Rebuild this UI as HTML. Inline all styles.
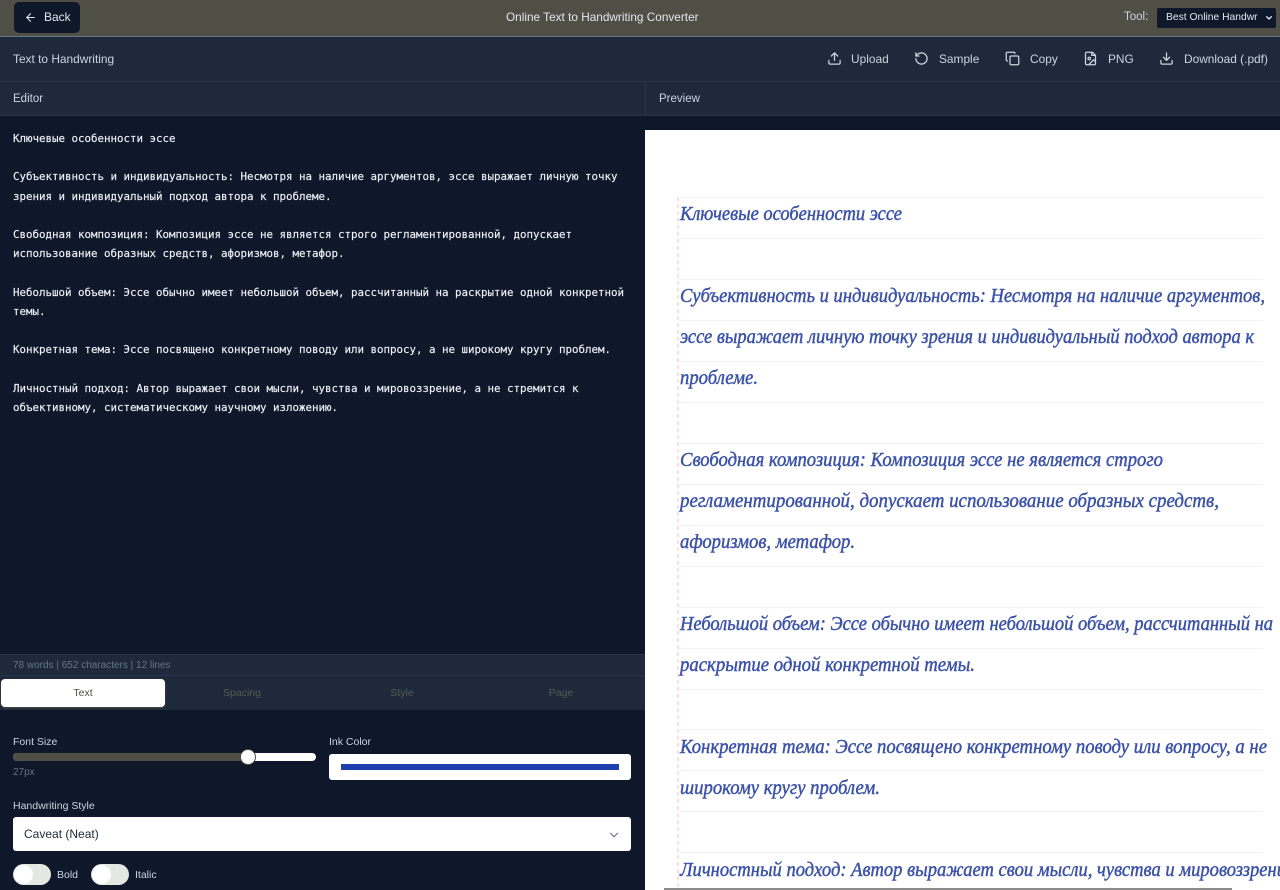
<!DOCTYPE html>
<html lang="ru"><head><meta charset="utf-8"><title>Online Text to Handwriting Converter</title>
<style>
*{box-sizing:border-box;margin:0;padding:0}
html,body{width:1280px;height:890px;overflow:hidden;background:#0f172a;font-family:"Liberation Sans",sans-serif}
.a{position:absolute;white-space:nowrap}
svg.i{position:absolute;fill:none;stroke:#cbd5e1;stroke-width:2;stroke-linecap:round;stroke-linejoin:round}
.tb{font-size:11.9px;color:#cbd5e1;top:52px;line-height:14px}
pre{position:absolute;left:13px;top:129px;font:10.8px/19.22px "DejaVu Sans Mono","Liberation Mono",monospace;color:#eef2f6;-webkit-text-stroke:.15px #eef2f6}
.lab{font-size:10.5px;color:#cbd5e1;line-height:12px}
.tab{top:687px;font-size:10.5px;line-height:13px;color:#565a4f;transform:translateX(-50%)}
</style></head><body>
<div class="a" style="left:0;top:0;width:1280px;height:37px;background:#4f4f45;border-bottom:1px solid #64748b"></div>
<div class="a" style="left:14px;top:2px;width:66px;height:31px;background:#0f172a;border-radius:5px"></div>
<svg class="i" style="left:24px;top:11px;stroke:#e2e8f0" width="13" height="13" viewBox="0 0 24 24"><path d="M19 12H5M12 19l-7-7 7-7"/></svg>
<div class="a" style="left:44px;top:10px;font-size:12px;line-height:15px;color:#e2e8f0">Back</div>
<div class="a" style="left:506px;top:10px;font-size:11.8px;line-height:15px;color:#e2e8f0">Online Text to Handwriting Converter</div>
<div class="a" style="left:1124px;top:10px;font-size:11.5px;line-height:15px;color:#cbd5e1">Tool:</div>
<div class="a" style="left:1157px;top:8px;width:119px;height:20px;background:#0f172a;border-radius:2px"></div>
<div class="a" style="left:1166px;top:11px;font-size:10.3px;line-height:14px;color:#e2e8f0">Best Online Handwr</div>
<svg class="i" style="left:1265px;top:14px;stroke:#e2e8f0;stroke-width:4" width="8" height="8" viewBox="0 0 24 24"><path d="M5 8l7 7 7-7"/></svg>

<div class="a" style="left:0;top:37px;width:1280px;height:45px;background:#1e293b;border-bottom:1px solid #27344a"></div>
<div class="a tb" style="left:13px">Text to Handwriting</div>
<svg class="i" style="left:827px;top:51px" width="15" height="15" viewBox="0 0 24 24"><path d="M21 15v4a2 2 0 0 1-2 2H5a2 2 0 0 1-2-2v-4M17 8l-5-5-5 5M12 3v12"/></svg>
<div class="a tb" style="left:851px">Upload</div>
<svg class="i" style="left:914px;top:51px" width="15" height="15" viewBox="0 0 24 24"><path d="M3 12a9 9 0 1 0 9-9 9.750 9.750 0 0 0-6.740 2.740L3 8"/><path d="M3 3v5h5"/></svg>
<div class="a tb" style="left:939px">Sample</div>
<svg class="i" style="left:1005px;top:51px" width="15" height="15" viewBox="0 0 24 24"><rect x="8" y="8" width="14" height="14" rx="2"/><path d="M4 16c-1.100 0-2-.9-2-2V4c0-1.100.9-2 2-2h10c1.100 0 2 .9 2 2"/></svg>
<div class="a tb" style="left:1030px">Copy</div>
<svg class="i" style="left:1083px;top:51px" width="15" height="15" viewBox="0 0 24 24"><path d="M15 2H6a2 2 0 0 0-2 2v16a2 2 0 0 0 2 2h12a2 2 0 0 0 2-2V7z"/><path d="M14 2v5h6"/><circle cx="10" cy="12" r="2"/><path d="M20 17l-3-3-7 7"/></svg>
<div class="a tb" style="left:1108px">PNG</div>
<svg class="i" style="left:1159px;top:51px" width="15" height="15" viewBox="0 0 24 24"><path d="M21 15v4a2 2 0 0 1-2 2H5a2 2 0 0 1-2-2v-4M7 10l5 5 5-5M12 15V3"/></svg>
<div class="a tb" style="left:1184px">Download (.pdf)</div>

<div class="a" style="left:0;top:82px;width:1280px;height:34px;background:#1e293b;border-bottom:1px solid #27344a"></div>
<div class="a" style="left:645px;top:82px;width:1px;height:808px;background:#27344a"></div>
<div class="a" style="left:13px;top:92px;font-size:11.5px;line-height:14px;color:#cbd5e1">Editor</div>
<div class="a" style="left:659px;top:92px;font-size:11.5px;line-height:14px;color:#cbd5e1">Preview</div>

<pre>Ключевые особенности эссе

Субъективность и индивидуальность: Несмотря на наличие аргументов, эссе выражает личную точку
зрения и индивидуальный подход автора к проблеме.

Свободная композиция: Композиция эссе не является строго регламентированной, допускает
использование образных средств, афоризмов, метафор.

Небольшой объем: Эссе обычно имеет небольшой объем, рассчитанный на раскрытие одной конкретной
темы.

Конкретная тема: Эссе посвящено конкретному поводу или вопросу, а не широкому кругу проблем.

Личностный подход: Автор выражает свои мысли, чувства и мировоззрение, а не стремится к
объективному, систематическому научному изложению.</pre>

<div class="a" style="left:0;top:654px;width:645px;height:22px;background:#1e293b;border-top:1px solid #27344a;border-bottom:1px solid #27344a"></div>
<div class="a" style="left:13px;top:660px;font-size:10px;line-height:12px;color:#64748b">78 words | 652 characters | 12 lines</div>
<div class="a" style="left:0;top:676px;width:645px;height:34px;background:#1e293b"></div>
<div class="a" style="left:1px;top:679px;width:164px;height:28px;background:#fff;border-radius:4px;box-shadow:0 1px 2px #4f4f45"></div>
<div class="a tab" style="left:83px;color:#4f4f45">Text</div>
<div class="a tab" style="left:242px">Spacing</div>
<div class="a tab" style="left:402px">Style</div>
<div class="a tab" style="left:561px">Page</div>

<div class="a lab" style="left:13px;top:736px">Font Size</div>
<div class="a" style="left:13px;top:753px;width:303px;height:8px;background:#fff;border-radius:4px"></div>
<div class="a" style="left:13px;top:753px;width:236px;height:8px;background:#4f4f45;border-radius:4px 0 0 4px"></div>
<div class="a" style="left:240px;top:749px;width:16px;height:16px;background:#fff;border-radius:50%;border:1px solid #4f4f45"></div>
<div class="a" style="left:13px;top:767px;font-size:10px;line-height:12px;color:#64748b">27px</div>
<div class="a lab" style="left:329px;top:736px">Ink Color</div>
<div class="a" style="left:329px;top:754px;width:302px;height:26px;background:#fff;border-radius:3px"></div>
<div class="a" style="left:341px;top:764px;width:278px;height:6px;background:#1e40af"></div>
<div class="a lab" style="left:13px;top:800px">Handwriting Style</div>
<div class="a" style="left:13px;top:817px;width:618px;height:34px;background:#fff;border-radius:3px"></div>
<div class="a" style="left:24px;top:827px;font-size:12px;line-height:14px;color:#1e293b">Caveat (Neat)</div>
<svg class="i" style="left:607px;top:828px;stroke:#64748b" width="14" height="14" viewBox="0 0 24 24"><path d="M6 9l6 6 6-6"/></svg>
<div class="a" style="left:13px;top:864px;width:38px;height:21px;background:#e5e7e2;border-radius:11px"></div>
<div class="a" style="left:14px;top:865px;width:19px;height:19px;background:#fff;border-radius:50%"></div>
<div class="a lab" style="left:57px;top:869px">Bold</div>
<div class="a" style="left:91px;top:864px;width:38px;height:21px;background:#e5e7e2;border-radius:11px"></div>
<div class="a" style="left:92px;top:865px;width:19px;height:19px;background:#fff;border-radius:50%"></div>
<div class="a lab" style="left:135px;top:869px">Italic</div>

<svg class="a" style="left:645px;top:116px" width="635" height="774" viewBox="645 116 635 774">
<rect x="645" y="116" width="635" height="774" fill="#0f172a"/>
<rect x="645" y="130" width="635" height="760" fill="#fff"/>
<g stroke="#f2f3f5" stroke-width="1">
<path d="M678 197.500H1263M678 238.500H1263M678 279.500H1263M678 320.500H1263M678 361.500H1263M678 402.500H1263M678 443.500H1263M678 484.500H1263M678 525.500H1263M678 566.500H1263M678 607.500H1263M678 648.500H1263M678 689.500H1263M678 729.500H1263M678 770.500H1263M678 811.500H1263M678 852.500H1263"/>
</g>
<path d="M678 197V888" stroke="#fbd5d5" stroke-width="1.500" stroke-dasharray="4 3"/>
<g font-family="Liberation Serif,serif" font-style="italic" font-size="20" fill="#3b52a8" stroke="#3b52a8" stroke-width=".45">
<text x="680" y="220" textLength="222" lengthAdjust="spacingAndGlyphs">Ключевые особенности эссе</text>
<text x="680" y="302" textLength="585" lengthAdjust="spacingAndGlyphs">Субъективность и индивидуальность: Несмотря на наличие аргументов,</text>
<text x="680" y="343" textLength="574" lengthAdjust="spacingAndGlyphs">эссе выражает личную точку зрения и индивидуальный подход автора к</text>
<text x="680" y="384" textLength="78" lengthAdjust="spacingAndGlyphs">проблеме.</text>
<text x="680" y="466" textLength="483" lengthAdjust="spacingAndGlyphs">Свободная композиция: Композиция эссе не является строго</text>
<text x="680" y="507" textLength="539" lengthAdjust="spacingAndGlyphs">регламентированной, допускает использование образных средств,</text>
<text x="680" y="548" textLength="175" lengthAdjust="spacingAndGlyphs">афоризмов, метафор.</text>
<text x="680" y="630" textLength="593" lengthAdjust="spacingAndGlyphs">Небольшой объем: Эссе обычно имеет небольшой объем, рассчитанный на</text>
<text x="680" y="671" textLength="295" lengthAdjust="spacingAndGlyphs">раскрытие одной конкретной темы.</text>
<text x="680" y="753" textLength="587" lengthAdjust="spacingAndGlyphs">Конкретная тема: Эссе посвящено конкретному поводу или вопросу, а не</text>
<text x="680" y="794" textLength="200" lengthAdjust="spacingAndGlyphs">широкому кругу проблем.</text>
<text x="680" y="876" textLength="606" lengthAdjust="spacingAndGlyphs">Личностный подход: Автор выражает свои мысли, чувства и мировоззрени</text>
</g>
<rect x="664" y="888" width="568" height="2" fill="#8a8a8a"/>
</svg>
</body></html>
